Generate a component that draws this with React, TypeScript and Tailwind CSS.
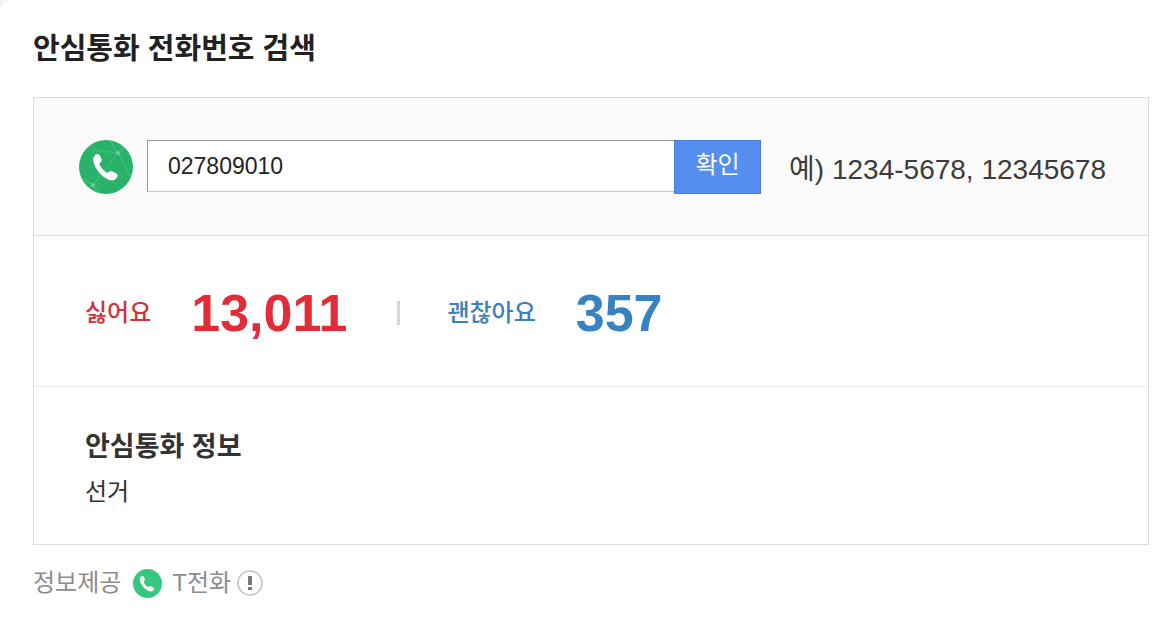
import { useState } from "react";

function HandsetPath() {
  return (
    <path
      fill="#fff"
      d="M16.4 14.700c1.6-1.3 3.6-.8 4.500.8l1.600 3.200c.8 1.700.1 3.200-1.600 4.200-.5.300-.6.800-.4 1.300 1.600 3.600 4 6.300 7.200 8.300.6.4 1.200.3 1.600-.2 1.500-1.500 2.900-1.500 4.400-.7l3.500 2c1.600 1 1.900 2.700.7 4.200-1.900 2.400-5 3.300-8.400 1.900-7-2.900-12.900-10-14.900-17.400-.8-3.100-.3-5.900 1.800-7.600z"
    />
  );
}

function PhoneBadge() {
  return (
    <svg viewBox="0 0 54 54" className="size-[54px] shrink-0" aria-hidden="true">
      <defs>
        <clipPath id="badge">
          <circle cx="27" cy="27" r="27" />
        </clipPath>
      </defs>
      <g clipPath="url(#badge)">
        <rect width="54" height="54" fill="#29b26a" />
        <g stroke="#5fcb91" strokeWidth="0.9" fill="none" opacity="0.65">
          <path d="M12 10 39 13 14 45M39 13 52 38M39 13 48 6M39 13 31 0M14 45 2 38M14 45 20 54" />
        </g>
        <circle cx="39" cy="13" r="1.9" fill="#72d39d" />
        <circle cx="14" cy="45" r="1.9" fill="#72d39d" />
        <HandsetPath />
      </g>
    </svg>
  );
}

function ProviderLogo() {
  return (
    <svg viewBox="0 0 54 54" className="size-[29px] shrink-0" aria-hidden="true">
      <circle cx="27" cy="27" r="27" fill="#37c77f" />
      <g transform="translate(-3 -2.500) scale(1.1)">
        <HandsetPath />
      </g>
    </svg>
  );
}

export default function App() {
  const [phone, setPhone] = useState("027809010");

  return (
    <div className="min-h-screen bg-[#f1f1f1]">
      <main className="min-h-screen rounded-tl-[10px] bg-white pt-7 pr-6 pb-4 pl-[33px] font-['Liberation_Sans','Noto_Sans_CJK_KR',sans-serif] text-[#333]">
        <h1 className="pt-px text-[29px] leading-10 font-bold text-[#222]">안심통화 전화번호 검색</h1>

        <section className="mt-7 border border-[#dcdcdc]">
          <form
            className="flex items-start border-b border-[#dcdcdc] bg-[#fafafa] pt-[42px] pr-[42px] pb-[41px] pl-[45px]"
            onSubmit={(e) => e.preventDefault()}
          >
            <PhoneBadge />
            <input
              type="text"
              aria-label="전화번호"
              value={phone}
              onChange={(e) => setPhone(e.target.value)}
              className="ml-[14px] h-[52px] min-w-0 flex-1 border border-r-0 border-[#999] border-b-[#c6c6c6] bg-white px-5 text-[23px] text-[#222] outline-none"
            />
            <button
              type="submit"
              className="h-[54px] w-[87px] shrink-0 border border-[#4a7fd6] bg-[#568eef] pb-1 text-2xl text-white"
            >
              확인
            </button>
            <p className="ml-7 shrink-0 pt-[10px] text-[28px] leading-10 text-[#3c3c3c]">예) 1234-5678, 12345678</p>
          </form>

          <dl className="flex h-[151px] items-center border-b border-[#ededed] pt-1 pl-[51px]">
            <dt className="text-2xl font-medium text-[#d2323c]">싫어요</dt>
            <dd className="ml-10 text-[52px] leading-[60px] font-bold text-[#e22c38]">13,011</dd>
            <dd className="mr-[47px] ml-[50px] h-6 w-[3px] bg-[#d6d6d6]" aria-hidden="true" />
            <dt className="text-2xl font-medium text-[#3f80b8]">괜찮아요</dt>
            <dd className="ml-10 text-[52px] leading-[60px] font-bold text-[#3782c0]">357</dd>
          </dl>

          <div className="px-[51px] pt-[42px] pb-[34px]">
            <h2 className="text-[27px] leading-9 font-bold">안심통화 정보</h2>
            <p className="mt-[9px] text-2xl leading-9">선거</p>
          </div>
        </section>

        <footer className="mt-5 flex items-center text-2xl leading-9 text-[#8c8c8c]">
          <span>정보제공</span>
          <span className="ml-3 flex items-center gap-[10px]">
            <ProviderLogo />
            <span>T전화</span>
          </span>
          <button type="button" aria-label="안내" className="ml-[6px]">
            <svg viewBox="0 0 26 26" className="size-[26px]" aria-hidden="true">
              <circle cx="13" cy="13" r="12" fill="#fff" stroke="#c4c4c4" strokeWidth="1.7" />
              <path fill="#777" d="M11 6h4v9h-4zM11 17h4v3h-4z" />
            </svg>
          </button>
        </footer>
      </main>
    </div>
  );
}
